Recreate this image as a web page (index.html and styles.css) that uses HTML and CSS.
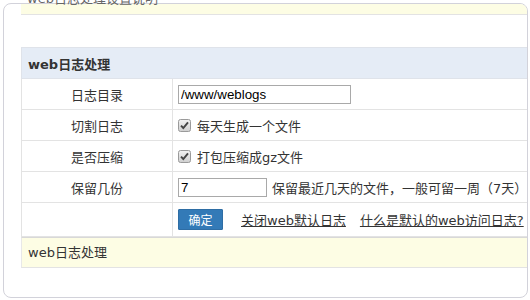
FILE: index.html
```html
<!DOCTYPE html>
<html lang="zh-CN">
<head>
<meta charset="utf-8">
<title>web日志处理</title>
<link rel="stylesheet" href="styles.css">
</head>
<body>
<div class="frame">
  <div class="note-top"><span class="note-text">web日志处理设置说明</span></div>
  <table class="form-table">
    <colgroup><col class="col-label"><col></colgroup>
    <tr class="head-row"><th colspan="2">web日志处理</th></tr>
    <tr>
      <td class="label">日志目录</td>
      <td class="value"><input class="text-in wide" type="text" value="/www/weblogs"></td>
    </tr>
    <tr>
      <td class="label">切割日志</td>
      <td class="value"><span class="check-line"><svg class="cb" width="13" height="13" viewBox="0 0 13 13"><defs><linearGradient id="g1" x1="0" y1="0" x2="0" y2="1"><stop offset="0" stop-color="#f2f2f2"/><stop offset="1" stop-color="#cfcfcf"/></linearGradient></defs><rect x="0.5" y="0.5" width="12" height="12" rx="2" fill="url(#g1)" stroke="#9a9a9a"/><path d="M3 6.6 L5.3 9 L10 3.4" fill="none" stroke="#444" stroke-width="1.9"/></svg>每天生成一个文件</span></td>
    </tr>
    <tr>
      <td class="label">是否压缩</td>
      <td class="value"><span class="check-line"><svg class="cb" width="13" height="13" viewBox="0 0 13 13"><defs><linearGradient id="g2" x1="0" y1="0" x2="0" y2="1"><stop offset="0" stop-color="#f2f2f2"/><stop offset="1" stop-color="#cfcfcf"/></linearGradient></defs><rect x="0.5" y="0.5" width="12" height="12" rx="2" fill="url(#g2)" stroke="#9a9a9a"/><path d="M3 6.6 L5.3 9 L10 3.4" fill="none" stroke="#444" stroke-width="1.9"/></svg>打包压缩成gz文件</span></td>
    </tr>
    <tr>
      <td class="label">保留几份</td>
      <td class="value"><span class="keep-line"><input class="text-in short" type="text" value="7"><span>保留最近几天的文件，一般可留一周（7天）</span></span></td>
    </tr>
    <tr class="action-row">
      <td class="label"></td>
      <td class="value"><span class="actions"><button class="btn" type="button">确定</button><a class="link" href="#">关闭web默认日志</a><a class="link" href="#">什么是默认的web访问日志?</a></span></td>
    </tr>
  </table>
  <div class="note-bottom">web日志处理</div>
</div>
</body>
</html>
```

FILE: styles.css
```css
html, body {
  margin: 0;
  padding: 0;
  background: #fff;
  overflow: hidden;
}
body {
  font-family: "DejaVu Sans", "Noto Sans CJK SC", sans-serif;
  font-size: 13px;
  color: #333;
}
.frame {
  box-sizing: border-box;
  margin: 3px 0 0 3px;
  width: 525px;
  height: 295px;
  border: 1px solid #d2d2da;
  border-radius: 8px;
  padding-left: 17px;
}
.note-top {
  box-sizing: border-box;
  height: 11px;
  display: flex;
  align-items: flex-end;
  background: #fdfde4;
  border-bottom: 1px solid #e3e3e3;
  border-top-right-radius: 7px;
}
.note-text {
  display: block;
  line-height: 14px;
  margin-bottom: 8px;
  padding-left: 6px;
  color: #666;
  white-space: nowrap;
}
.form-table {
  margin-top: 32px;
  width: 100%;
  table-layout: fixed;
  border-collapse: collapse;
}
.col-label { width: 151px; }
.form-table th,
.form-table td {
  border: 1px solid #e3e3e3;
  padding: 0;
}
.form-table td:last-child,
.form-table th {
  border-right: none;
}
.head-row th {
  height: 30px;
  background: #e5ecf6;
  text-align: left;
  padding-left: 6px;
  font-weight: bold;
  border-color: #dfe3ea;
}
.label {
  height: 30px;
  text-align: center;
}
.value {
  padding-left: 5px !important;
  white-space: nowrap;
  overflow: visible;
}
.text-in {
  box-sizing: border-box;
  height: 19px;
  border: 1px solid #a9a9a9;
  padding: 0 2px;
  margin: 0;
  font-family: "Liberation Sans", Arial, sans-serif;
  font-size: 13.33px;
  color: #000;
  vertical-align: middle;
}
.wide { width: 173px; }
.short { width: 89px; }
.check-line,
.keep-line,
.actions {
  display: flex;
  align-items: center;
}
.cb { margin-right: 6px; flex: none; }
.keep-line { gap: 5px; }
.action-row td { height: 33px; }
.btn {
  box-sizing: border-box;
  width: 45px;
  height: 21px;
  background: #337ab7;
  border: 1px solid #2e6da4;
  color: #fff;
  font-family: "Noto Sans CJK SC", sans-serif;
  font-size: 12px;
  padding: 0;
  margin: 0 18px 0 0;
  border-radius: 1px;
  flex: none;
}
.link {
  color: #333;
  text-decoration: underline;
  margin-right: 14px;
  flex: none;
}
.note-bottom {
  box-sizing: border-box;
  height: 31px;
  line-height: 30px;
  background: #fdfde4;
  border-top: 1px solid #d8d8d8;
  border-bottom: 1px solid #e3e3e3;
  border-left: 1px solid #e8e8e8;
  padding-left: 6px;
}
```
